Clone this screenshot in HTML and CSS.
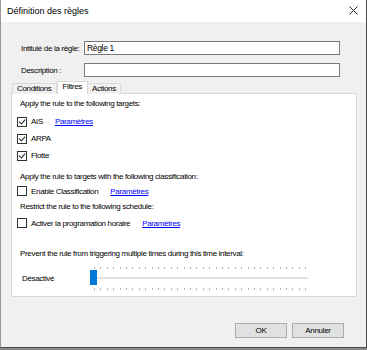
FILE: index.html
```html
<!DOCTYPE html>
<html lang="fr">
<head>
<meta charset="UTF-8">
<title>Définition des règles</title>
<link rel="stylesheet" href="styles.css">
</head>
<body>
<div class="window">
  <div class="titlebar">
    <span class="title">Définition des règles</span>
    <svg class="close" width="9" height="9" viewBox="0 0 9 9"><path d="M0.5 0.5 L8.5 8.5 M8.5 0.5 L0.5 8.5" stroke="#222" stroke-width="1" fill="none"/></svg>
  </div>

  <div class="client">
    <!-- Rule name / description -->
    <div class="field">
      <span class="field-label">Intitulé de la règle:</span>
      <div class="textbox">Règle 1</div>
    </div>
    <div class="field">
      <span class="field-label">Description :</span>
      <div class="textbox"></div>
    </div>

    <!-- Tabs -->
    <div class="tabs">
      <div class="tab">Conditions</div>
      <div class="tab selected">Filtres</div>
      <div class="tab">Actions</div>
    </div>

    <div class="panel">
      <div class="heading first">Apply the rule to the following targets:</div>
      <div class="check"><span class="box checked"></span>AIS<a class="link">Paramètres</a></div>
      <div class="check"><span class="box checked"></span>ARPA</div>
      <div class="check"><span class="box checked"></span>Flotte</div>

      <div class="heading second">Apply the rule to targets with the following classification:</div>
      <div class="check"><span class="box"></span>Enable Classification<a class="link">Paramètres</a></div>

      <div class="heading third">Restrict the rule to the following schedule:</div>
      <div class="check gap"><span class="box"></span>Activer la programation horaire<a class="link">Paramètres</a></div>

      <div class="heading fourth">Prevent the rule from triggering multiple times during this time interval:</div>
      <div class="slider-row">
        <span class="slider-label">Désactivé</span>
        <div class="slider">
          <div class="ticks top"></div>
          <div class="track"></div>
          <div class="ticks bottom"></div>
          <div class="thumb"></div>
        </div>
      </div>
    </div>

    <div class="footer">
      <button class="btn">OK</button>
      <button class="btn">Annuler</button>
    </div>
  </div>
</div>
</body>
</html>
```

FILE: styles.css
```css
body {
  margin: 0;
  background: #8a8a8a;
  font-family: 'Liberation Sans', Arial, sans-serif;
  font-size: 8px;
  letter-spacing: -0.33px;
  color: #000;
}
.window {
  width: 365px;
  height: 347px;
  border-left: 1px solid #9a9a9a;
  border-right: 1px solid #4a4a4a;
  border-bottom: 1px solid #4a4a4a;
  background: #f0f0f0;
  display: flex;
  flex-direction: column;
}
.titlebar {
  height: 22px;
  background: #fff;
  display: flex;
  align-items: center;
  justify-content: space-between;
  padding: 0 8px 0 6px;
}
.title {
  font-size: 9px;
  letter-spacing: 0;
  margin-top: -1px;
}
.close {
  margin-top: -1px;
}
.client {
  flex: 1;
  padding-top: 19px;
}
.field {
  display: flex;
  align-items: center;
  height: 14px;
  margin: 0 0 8px 20px;
}
.field-label {
  width: 63px;
}
.textbox {
  box-sizing: border-box;
  width: 256px;
  height: 14px;
  border: 1px solid #7a7a7a;
  background: #fff;
  padding: 1px 2px;
  line-height: 10px;
  font-size: 8.5px;
}
.tabs {
  display: flex;
  align-items: flex-end;
  height: 13px;
  margin: -4px 0 0 11px;
  position: relative;
  z-index: 1;
}
.tab {
  box-sizing: border-box;
  height: 11px;
  padding: 0 4px;
  border: 1px solid #d9d9d9;
  border-bottom: none;
  background: #f0f0f0;
  line-height: 10px;
}
.tab + .tab {
  border-left: none;
}
.tab.selected {
  height: 13px;
  background: #fff;
  border-left: 1px solid #d9d9d9;
  padding: 0 5px;
  line-height: 10px;
}
.tab.selected + .tab {
  border-left: none;
}
.panel {
  box-sizing: border-box;
  height: 204px;
  margin: -1px 9px 0 10px;
  border: 1px solid #d9d9d9;
  background: #fff;
  padding: 0 8px;
}
.heading {
  height: 12px;
  line-height: 12px;
}
.heading.first { margin-top: 4px; }
.heading.second { margin-top: 7px; }
.heading.third { margin-top: 2px; }
.heading.fourth { margin-top: 17px; }
.check {
  display: flex;
  align-items: center;
  height: 17px;
  margin-left: -3px;
}
.heading.first + .check { margin-top: 3px; }
.heading.second + .check { height: 16px; }
.check.gap { margin-top: 2px; height: 16px; }
.box {
  box-sizing: border-box;
  width: 10px;
  height: 10px;
  border: 1px solid #333;
  background: #fff;
  margin-right: 4px;
  position: relative;
}
.box.checked::after {
  content: '';
  position: absolute;
  left: 2px;
  top: 0px;
  width: 3px;
  height: 5px;
  border-right: 1px solid #222;
  border-bottom: 1px solid #222;
  transform: rotate(40deg);
}
.link {
  margin-left: 12px;
  color: #0000ff;
  text-decoration: underline;
}
.slider-row {
  display: flex;
  align-items: center;
  height: 24px;
  margin-top: 6px;
}
.slider-label {
  width: 68px;
  margin-left: 2px;
}
.slider {
  position: relative;
  width: 218px;
  height: 24px;
}
.ticks {
  position: absolute;
  left: 4px;
  width: 212px;
  height: 2px;
  background: repeating-linear-gradient(to right, #b5b5b5 0 1px, transparent 1px 6.4px);
}
.ticks.top { top: 1px; }
.ticks.bottom { top: 22px; }
.track {
  position: absolute;
  left: 4px;
  right: 0;
  top: 11px;
  height: 2px;
  background: #e2e2e2;
}
.thumb {
  position: absolute;
  left: 0;
  top: 4px;
  width: 7px;
  height: 15px;
  background: #0078d7;
}
.footer {
  display: flex;
  justify-content: flex-end;
  gap: 5px;
  margin-top: 26px;
  padding-right: 22px;
}
.btn {
  box-sizing: border-box;
  width: 52px;
  height: 15px;
  border: 1px solid #adadad;
  background: #e1e1e1;
  font-family: inherit;
  font-size: 8px;
  letter-spacing: -0.33px;
  padding: 0;
  color: #000;
}
```
